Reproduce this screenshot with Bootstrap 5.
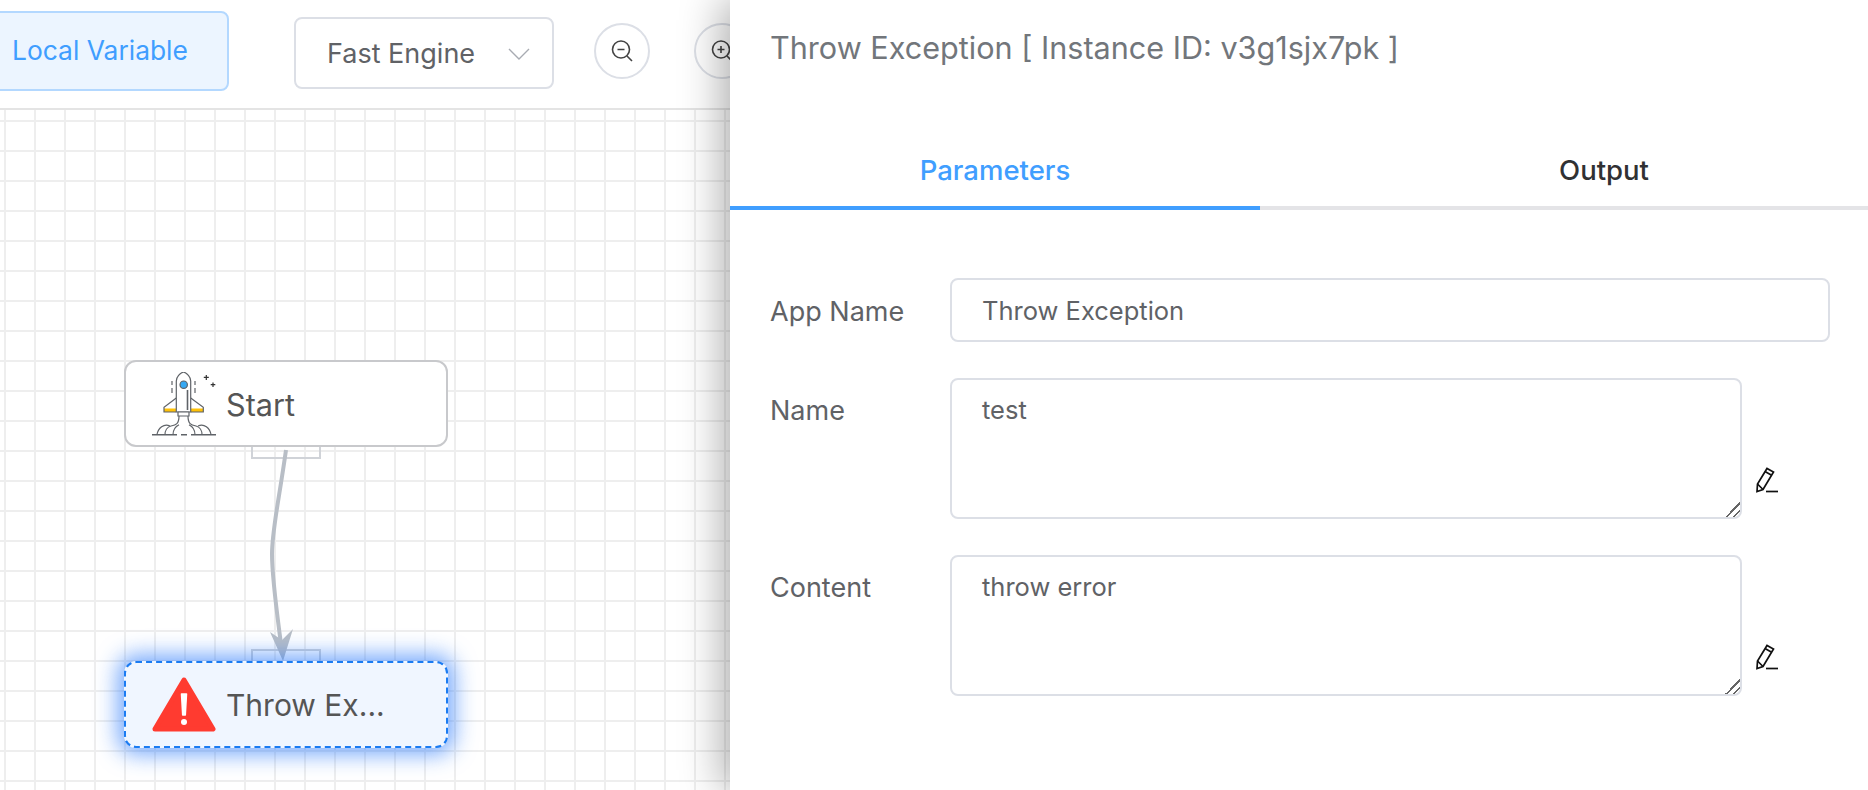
<!DOCTYPE html>
<html lang="en">
<head>
  <meta charset="UTF-8" />
  <meta name="viewport" content="width=device-width, initial-scale=1.0"/>
  <title>Throw Exception</title>
  <link href="https://cdn.jsdelivr.net/npm/bootstrap@5.3.2/dist/css/bootstrap.min.css" rel="stylesheet" />
  <style>
    html, body { height: 790px; overflow: hidden; }
    body { font-family: Inter, "Noto Sans", sans-serif; color: #606266; background: #fff; }
    .page-wrap { height: 790px; }

    .left-side { width: 730px; flex: none; overflow: hidden; }
    .tool-bar { height: 110px; border-bottom: 2px solid #e4e4e4; padding-top: 11px; }
    .var-btn { width: 241px; height: 80px; flex: none; margin-left: -12px; margin-right: 65px; padding: 0 0 1px 22px; font-size: 26.4px; color: #409eff; background: #ecf5ff; border: 2px solid #b3d8ff; border-radius: 8px; text-align: left; }
    .engine-box { width: 260px; height: 72px; flex: none; margin-top: 6px; margin-right: 40px; padding: 2px 22px 0 31px; font-size: 27px; border: 2px solid #dcdfe6; border-radius: 8px; }
    .round-btn { width: 56px; height: 56px; margin-top: 12px; margin-right: 44px; padding: 0; flex: none; background: #fff; border: 2px solid #dcdfe6; border-radius: 50%; }

    .flow-canvas {
      position: relative; height: 680px;
      background-color: #fff;
      background-image: linear-gradient(#eee 2px, transparent 2px), linear-gradient(90deg, #eee 2px, transparent 2px);
      background-size: 30px 30px;
      background-position: 4px 10px;
    }
    .flow-node { position: absolute; left: 124px; width: 324px; height: 87px; padding-left: 26px; gap: 10px; font-size: 30px; color: #555; background: #fff; border: 2px solid #c8c9cc; border-radius: 12px; }
    .node-start { top: 250px; }
    .node-start span { font-size: 30.6px; padding-top: 3px; }
    .node-throw { top: 551px; background: #f0f6ff; border: 2px dashed #1a7bf2; box-shadow: 0 0 22px 6px rgba(40, 120, 250, .65); }
    .node-throw span { padding-top: 1px; }
    .port-box { position: absolute; left: 251px; width: 70px; height: 12px; border: 2px solid #d0d3d8; }
    .port-out { top: 337px; border-top: 0; }
    .port-in { top: 539px; border-bottom: 0; }
    .flow-line { position: absolute; left: 0; top: 0; }

    .side-panel { flex: 1; position: relative; z-index: 2; background: #fff; box-shadow: -8px 0 40px rgba(0, 0, 0, .32); }
    .panel-title { height: 96px; padding: 27px 0 0 40px; font-size: 30.6px; line-height: 42px; color: #72767b; }
    .panel-tabs { height: 114px; border-bottom: 4px solid #e4e4e7; }
    .tab-item { height: 114px; margin-bottom: -4px; padding: 56px 0 22px; font-size: 27.5px; line-height: 36px; font-weight: 500; color: #303133; background: none; border: 0; }
    .tab-on { width: 530px; padding-bottom: 18px; color: #409eff; border-bottom: 4px solid #409eff; }
    .tab-off { flex: 1; padding-left: 80px; }
    .panel-form { padding: 68px 38px 0 40px; }
    .form-row-item { margin-bottom: 36px; }
    .field-name { width: 180px; flex: none; margin: 0; font-size: 27px; line-height: 36px; color: #606266; }
    .field-name-top { padding-top: 15px; }
    .field-name-mid { padding-top: 3px; }
    .field-input.form-control { height: 64px; padding: 1px 30px 0; font-size: 25.500px; color: #606266; border: 2px solid #dcdfe6; border-radius: 8px; }
    .field-area.form-control { width: 792px; height: 141px; flex: none; padding: 12px 30px; font-size: 25.500px; line-height: 36px; color: #606266; border: 2px solid #dcdfe6; border-radius: 8px; box-shadow: none; }
    .field-area::-webkit-resizer { background: linear-gradient(135deg, transparent 0 50%, #666 50% 57%, transparent 57% 74%, #666 74% 81%, transparent 81%); }
    .pen-icon { margin-left: 14px; margin-bottom: 26px; }
  </style>
</head>
<body>
  <div class="page-wrap d-flex">
    <div class="left-side">
      <div class="tool-bar d-flex align-items-start">
        <button class="var-btn">Local Variable</button>
        <div class="engine-box d-flex align-items-center justify-content-between">
          <span>Fast Engine</span>
          <svg width="22" height="14" viewBox="0 0 22 14" fill="none" stroke="#a8abb2" stroke-width="1.4"><path d="M1 2l10 10L21 2"/></svg>
        </div>
        <button class="round-btn d-flex align-items-center justify-content-center">
          <svg width="24" height="24" viewBox="0 0 24 24" fill="none" stroke="#444" stroke-width="1.6"><circle cx="11" cy="10.5" r="8.5"/><path d="M7.5 10.5h7M17 17l5 5"/></svg>
        </button>
        <button class="round-btn d-flex align-items-center justify-content-center">
          <svg width="24" height="24" viewBox="0 0 24 24" fill="none" stroke="#444" stroke-width="1.6"><circle cx="11" cy="10.5" r="8.5"/><path d="M7.5 10.5h7M11 7v7M17 17l5 5"/></svg>
        </button>
      </div>

      <div class="flow-canvas">
        <div class="port-box port-out"></div>
        <div class="port-box port-in"></div>

        <div class="flow-node node-start d-flex align-items-center">
          <svg width="64" height="64" viewBox="0 0 64 64" fill="none" stroke="#5f6368" stroke-width="1.2">
            <path d="M12 36.5h12.3v3.5H12zM38.7 36.5H51.3v3.5H38.7z" fill="#ffc107" stroke="none"/>
            <path d="M24.3 26L12 35.3V40h12.3M38.7 26l12.6 9.3V40H38.7"/>
            <path d="M24.3 40V9C24.3 5 28 1 31.5 0c3.5 1 7.2 5 7.2 9v31z" fill="#fff"/>
            <path d="M35.5 18v20" stroke-width="1.6"/>
            <circle cx="31.7" cy="12.7" r="3.7" fill="#36a9f4"/>
            <path d="M26 40h11v4H26z" fill="#fff"/>
            <path d="M20 9v4M20 16v5M43 9v4M43 16v5"/>
            <path d="M54.3 3v5M51.8 5.3h5M61 10.5v4.5M58.7 12.7h4.6" stroke="#333"/>
            <path d="M27 44c0 8-3 9-8 10-4 1-6 5-6 8.700M36 44c0 8 3 9 8 10 4 1 6 5 6 8.700"/>
            <path d="M18 54c-6-3-12 2-13 8.700M46 54c6-3 12 2 13 8.700M21 62.700c0-5 2-8 6-10M43 62.700c0-5-2-8-6-10" />
            <path d="M0 62.700h25M29 62.700h6M39 62.700h25" stroke-width="1.4"/>
          </svg>
          <span>Start</span>
        </div>

        <svg class="flow-line" width="400" height="680" fill="none">
          <path d="M286 340C279 390 272 420 272 444C272 470 278 510 282 542" stroke="#b8bec6" stroke-width="4"/>
          <path d="M270 522L282 530L293 519L283 551Z" fill="#b8bec6"/>
        </svg>

        <div class="flow-node node-throw d-flex align-items-center">
          <svg width="64" height="56" viewBox="0 0 64 56">
            <path d="M32 3L61 52H3Z" fill="#ff3b30" stroke="#ff3b30" stroke-width="5" stroke-linejoin="round"/>
            <path d="M29.500 17h5l-1.200 21h-2.600z" fill="#fff" stroke="#fff" stroke-linejoin="round" stroke-width="1.500"/>
            <circle cx="32" cy="45" r="3" fill="#fff"/>
          </svg>
          <span>Throw Ex...</span>
        </div>
      </div>
    </div>

    <div class="side-panel">
      <div class="panel-title">Throw Exception [ Instance ID: v3g1sjx7pk ]</div>
      <div class="panel-tabs d-flex">
        <button class="tab-item tab-on">Parameters</button>
        <button class="tab-item tab-off">Output</button>
      </div>
      <form class="panel-form">
        <div class="form-row-item d-flex align-items-center">
          <label class="field-name field-name-mid">App Name</label>
          <input class="form-control field-input" value="Throw Exception">
        </div>
        <div class="form-row-item d-flex align-items-start">
          <label class="field-name field-name-top">Name</label>
          <textarea class="form-control field-area">test</textarea>
          <svg class="pen-icon align-self-end" width="24" height="26" viewBox="0 0 24 26" fill="none" stroke="#111" stroke-width="1.700">
            <path d="M1 24.500L1.500 17L11 1.500L17.500 5L7 22.500Z"/><path d="M9 4.500l6.200 3.500M1.500 17l5.500 5.500"/><path d="M10 24.500h12"/>
          </svg>
        </div>
        <div class="form-row-item d-flex align-items-start">
          <label class="field-name field-name-top">Content</label>
          <textarea class="form-control field-area">throw error</textarea>
          <svg class="pen-icon align-self-end" width="24" height="26" viewBox="0 0 24 26" fill="none" stroke="#111" stroke-width="1.700">
            <path d="M1 24.500L1.500 17L11 1.500L17.500 5L7 22.500Z"/><path d="M9 4.500l6.200 3.500M1.500 17l5.500 5.500"/><path d="M10 24.500h12"/>
          </svg>
        </div>
      </form>
    </div>
  </div>
  <script src="https://cdn.jsdelivr.net/npm/bootstrap@5.3.2/dist/js/bootstrap.bundle.min.js"></script>
</body>
</html>
